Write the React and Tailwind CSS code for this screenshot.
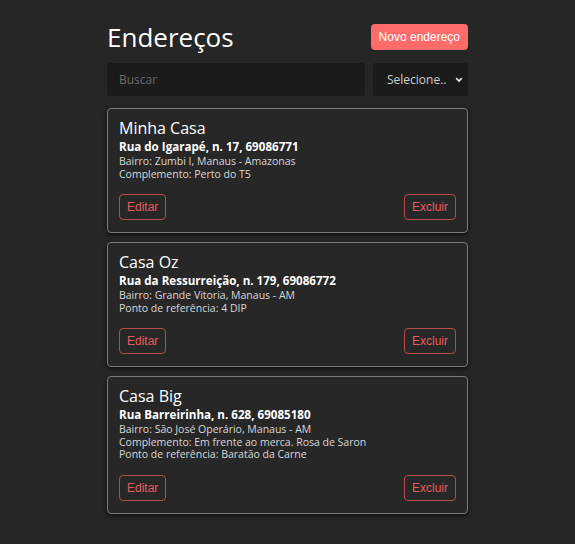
import React from "react";

const addresses = [
  {
    name: "Minha Casa",
    street: "Rua do Igarapé, n. 17, 69086771",
    lines: ["Bairro: Zumbi I, Manaus - Amazonas", "Complemento: Perto do T5"],
  },
  {
    name: "Casa Oz",
    street: "Rua da Ressurreição, n. 179, 69086772",
    lines: ["Bairro: Grande Vitoria, Manaus - AM", "Ponto de referência: 4 DIP"],
  },
  {
    name: "Casa Big",
    street: "Rua Barreirinha, n. 628, 69085180",
    lines: [
      "Bairro: São José Operário, Manaus - AM",
      "Complemento: Em frente ao merca. Rosa de Saron",
      "Ponto de referência: Baratão da Carne",
    ],
  },
];

const AddressCard = ({ item }) => (
  <div className="rounded-[4px] border border-[#7a7a7a] bg-[#272727] px-[11px] pt-[9px] pb-[12px] shadow-[0_2px_4px_rgba(0,0,0,0.6)]">
    <h2 className="text-[16px] leading-[20px] font-medium text-white">{item.name}</h2>
    <p className="mt-[1px] text-[11.6px] leading-[16px] font-bold text-white">{item.street}</p>
    <div className="text-[10.5px] leading-[12.5px] text-[#d8d8d8]">
      {item.lines.map((line) => (
        <p key={line}>{line}</p>
      ))}
    </div>
    <div className="mt-[14px] flex justify-between font-['Liberation_Sans',Arial,sans-serif]">
      <button className="h-[26px] rounded-[4px] border border-[#b84a4a] px-[7px] text-[12px] text-[#e85c5c]">
        Editar
      </button>
      <button className="h-[26px] rounded-[4px] border border-[#b84a4a] px-[7px] text-[12px] text-[#e85c5c]">
        Excluir
      </button>
    </div>
  </div>
);

const App = () => {
  return (
    <div className="min-h-screen bg-[#262626] font-['Open_Sans',sans-serif]">
      <div className="mx-auto w-[361px] pt-[21px]">
        {/* Header */}
        <div className="flex items-center justify-between">
          <h1 className="text-[26px] leading-[32px] font-medium text-white">Endereços</h1>
          <button className="h-[26px] rounded-[4px] bg-[#ff6b6b] px-2 font-['Liberation_Sans',Arial,sans-serif] text-[12px] text-white">
            Novo endereço
          </button>
        </div>

        {/* Filters */}
        <div className="mt-[10px] flex gap-2">
          <input
            type="text"
            placeholder="Buscar"
            className="h-[33px] flex-1 rounded-[3px] bg-[#1b1b1b] px-3 text-[12px] text-white outline-none placeholder:text-[#6a6a6a]"
          />
          <div className="relative w-[95px]">
            <select className="h-[33px] w-full appearance-none rounded-[3px] bg-[#1b1b1b] pl-[14px] text-[12px] text-[#cfcfcf] outline-none">
              <option>Selecione..</option>
            </select>
            <svg
              className="pointer-events-none absolute right-[5px] top-[14px]"
              width="8"
              height="6"
              viewBox="0 0 8 6"
              fill="none"
            >
              <path d="M1.2 1.2 4 4 6.8 1.2" stroke="#e5e5e5" strokeWidth="1.7" />
            </svg>
          </div>
        </div>

        {/* Cards */}
        <div className="mt-3 flex flex-col gap-[9px]">
          {addresses.map((item) => (
            <AddressCard key={item.name} item={item} />
          ))}
        </div>
      </div>
    </div>
  );
};

export default App;
